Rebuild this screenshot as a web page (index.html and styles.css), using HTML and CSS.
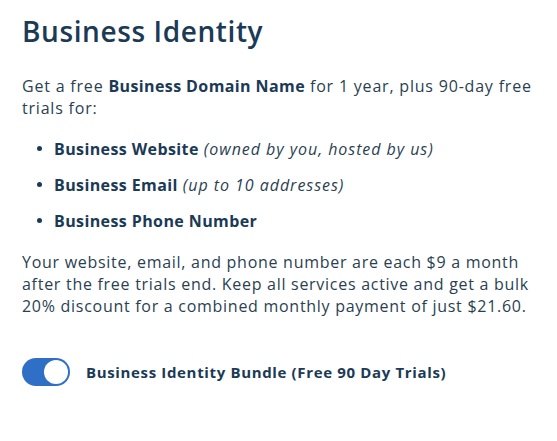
FILE: index.html
```html
<!DOCTYPE html>
<html lang="en">
<head>
<meta charset="utf-8">
<link rel="stylesheet" href="styles.css">
</head>
<body>
<main class="card">
  <h1 class="title">Business Identity</h1>
  <p class="intro">Get a free <strong>Business Domain Name</strong> for 1 year, plus 90-day free trials for:</p>
  <ul class="features">
    <li><strong>Business Website</strong> <em>(owned by you, hosted by us)</em></li>
    <li><strong>Business Email</strong> <em>(up to 10 addresses)</em></li>
    <li><strong>Business Phone Number</strong></li>
  </ul>
  <p class="pricing">Your website, email, and phone number are each $9 a month after the free trials end. Keep all services active and get a bulk 20% discount for a combined monthly payment of just $21.60.</p>
  <label class="bundle">
    <span class="switch"><span class="knob"></span></span>
    <span class="bundle-label">Business Identity Bundle (Free 90 Day Trials)</span>
  </label>
</main>
</body>
</html>
```

FILE: styles.css
```css
html, body {
  margin: 0;
  padding: 0;
  background: #ffffff;
}
body {
  font-family: "Open Sans", "Noto Sans", sans-serif;
  color: #1d3a52;
}
.card {
  padding: 12px 22px 0 22px;
  width: 522px;
}
.title {
  margin: 0;
  font-size: 28px;
  font-weight: 600;
  line-height: 38px;
  letter-spacing: 0.6px;
  color: #1b3a55;
}
.intro, .pricing {
  margin: 0;
  font-size: 16px;
  line-height: 22px;
  letter-spacing: 0.8px;
  color: #2a3f52;
}
.intro {
  margin-top: 25px;
}
.intro strong, .features strong {
  font-weight: 700;
  letter-spacing: 0.4px;
  color: #1b3a55;
}
.features {
  list-style: none;
  margin: 19px 0 0 0;
  padding: 0 0 0 15px;
  display: flex;
  flex-direction: column;
  gap: 14px;
}
.features li {
  font-size: 16px;
  line-height: 22px;
  display: flex;
  gap: 5px;
  align-items: baseline;
}
.features li::before {
  content: "";
  width: 5px;
  height: 5px;
  border-radius: 50%;
  background: #1b3a55;
  margin-right: 7px;
  flex: none;
  transform: translateY(-4px);
}
.features em {
  color: #2a3f52;
  font-weight: 400;
  letter-spacing: 0.95px;
}
.pricing {
  margin-top: 19px;
  letter-spacing: 0.72px;
}
.bundle {
  margin-top: 41px;
  display: flex;
  align-items: center;
  gap: 16px;
}
.switch {
  width: 48px;
  height: 28px;
  border-radius: 14px;
  background: #2f6fc6;
  display: flex;
  align-items: center;
  justify-content: flex-end;
  padding: 0 2px;
  box-sizing: border-box;
  flex: none;
}
.knob {
  width: 24px;
  height: 24px;
  border-radius: 50%;
  background: #ffffff;
}
.bundle-label {
  font-size: 15px;
  font-weight: 700;
  color: #1b3a55;
  letter-spacing: 0.65px;
}
```
